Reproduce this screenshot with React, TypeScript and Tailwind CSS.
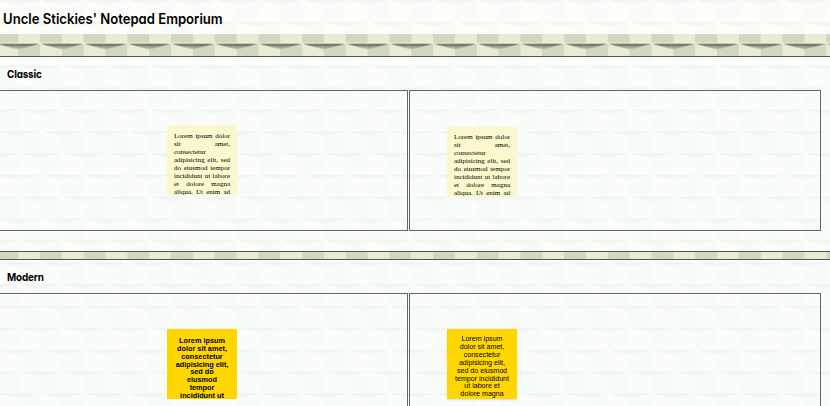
import React from 'react';

const T = 43.68;

function Backdrop() {
  return (
    <svg className="absolute inset-0 -z-10" width="830" height="406">
      <defs>
        <linearGradient id="shade" x1="0" x2="0" y1="0" y2="1">
          <stop offset="0" stopColor="#4a5045" stopOpacity="1" />
          <stop offset="0.4" stopColor="#7d8472" stopOpacity="0.85" />
          <stop offset="1" stopColor="#a3aa95" stopOpacity="0.5" />
        </linearGradient>
        <pattern id="relief" x="40" y="0" width={T} height={T} patternUnits="userSpaceOnUse">
          <rect width="44" height="44" fill="#e7edd3" />
          <rect x="21.84" y="0" width="21.84" height="21.84" fill="#d2d8c0" />
          <rect x="0" y="21.84" width="21.84" height="21.84" fill="#d2d8c0" />
          <path d="M1 0.2H42.7L21.84 5.6Z" fill="url(#shade)" />
          <path d="M-20.84 22H20.84L0 27.4ZM22.84 22H64.52L43.68 27.4Z" fill="url(#shade)" />
          <path d="M0 21.3H43.68M0 43.1H43.68" stroke="#f3f7e4" strokeWidth="0.8" />
        </pattern>
      </defs>
      <rect width="830" height="406" fill="url(#relief)" />
    </svg>
  );
}

const lorem =
  'Lorem ipsum dolor sit amet, consectetur adipisicing elit, sed do eiusmod tempor incididunt ut labore et dolore magna aliqua. Ut enim ad';
const loremShort =
  'Lorem ipsum dolor sit amet, consectetur adipisicing elit, sed do eiusmod tempor incididunt ut';
const loremMedium =
  'Lorem ipsum dolor sit amet, consectetur adipisicing elit, sed do eiusmod tempor incididunt ut labore et dolore magna';

function Note({ text, className }: { text: string; className: string }) {
  return (
    <div className={`h-[70px] w-[70px] overflow-hidden ${className}`}>
      <p>{text}</p>
    </div>
  );
}

function Section({ title, first, second, pads }: { title: string; first: React.ReactNode; second: React.ReactNode; pads: [string, string] }) {
  return (
    <section className="h-[196px] border-y border-[#555] bg-[#fbfefc]/93">
      <h2 className="h-[33px] pl-[7px] pt-[9px] text-[11px] leading-[17px] font-bold">
        <span className="inline-block origin-left scale-x-[0.9] tracking-[-0.2px] [font-feature-settings:'cv11']">{title}</span>
      </h2>
      <div className="flex gap-px">
        <div className={`h-[141px] w-[408px] border border-l-0 border-[#666] pl-[167px] ${pads[0]}`}>{first}</div>
        <div className={`h-[141px] w-[412px] border border-[#666] pl-[37px] ${pads[1]}`}>{second}</div>
      </div>
    </section>
  );
}

export default function App() {
  return (
    <main className="relative isolate h-[406px] w-[830px] overflow-hidden font-[Inter,sans-serif] text-black">
      <Backdrop />
      <header className="mb-[22px] h-[34px] bg-[#fefefd]/93 pl-[3px] pt-[9px]">
        <h1 className="w-max origin-left scale-x-[0.91] text-[14.4px] leading-[20px] font-semibold whitespace-nowrap [font-feature-settings:'cv11']">
          Uncle Stickies' Notepad Emporium
        </h1>
      </header>
      <Section
        title="Classic"
        pads={['pt-[34px]', 'pt-[36px]']}
        first={<Note text={lorem} className="bg-[#f9f9cd] px-[7px] pt-[7px] text-justify font-['Liberation_Serif',serif] text-[7px] leading-[8px] [text-align-last:justify]" />}
        second={<Note text={lorem} className="bg-[#f9f9cd] px-[7px] pt-[6px] text-justify font-['Liberation_Serif',serif] text-[7px] leading-[8px] [text-align-last:justify]" />}
      />
      <div className="h-[7px]" />
      <Section
        title="Modern"
        pads={['pt-[35px]', 'pt-[35px]']}
        first={<Note text={loremShort} className="bg-[#ffd600] px-[7.5px] pt-[8px] text-center font-['Liberation_Sans',sans-serif] text-[7.3px] leading-[7.85px] font-bold" />}
        second={<Note text={loremMedium} className="bg-[#ffd600] px-[7px] pt-[7px] text-center font-['Liberation_Sans',sans-serif] text-[7.1px] leading-[7.9px] shadow-sm" />}
      />
    </main>
  );
}
